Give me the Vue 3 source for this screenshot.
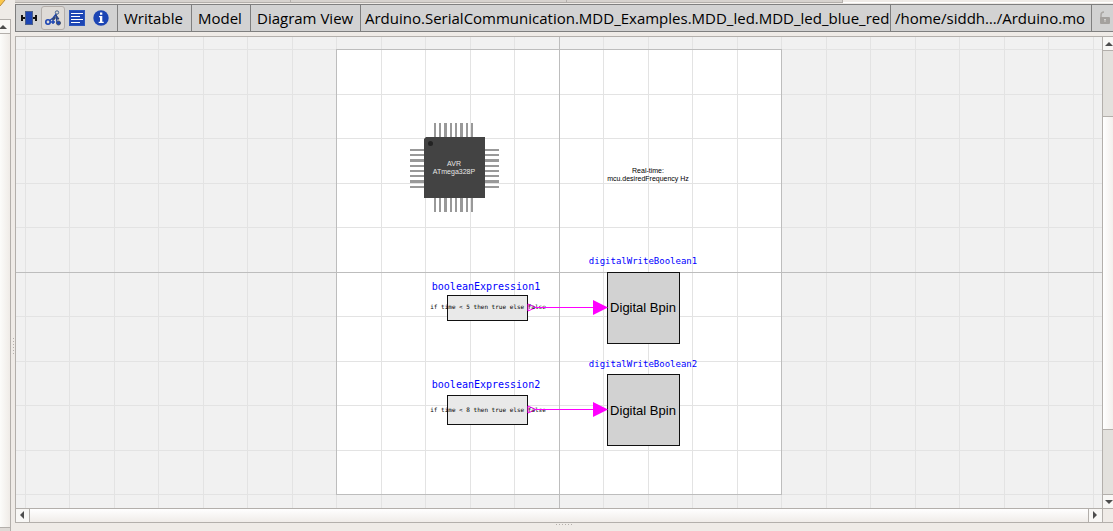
<script setup>
const STEP = 44.5
const CX = 559
const CY = 272
const offsets = Array.from({ length: 41 }, (_, i) => i - 20)
const columns = offsets.map((k) => Math.floor(CX + k * STEP))
const rows = offsets.map((k) => Math.floor(CY + k * STEP))

const pinsX = [[434, 2], [439, 2], [444, 3], [450, 2], [455, 2], [460, 3], [466, 2], [471, 2]]
const pinsY = [[149, 2], [154, 2], [159, 3], [165, 2], [170, 2], [175, 2], [180, 3], [186, 2]]

const expressions = [
  { name: 'booleanExpression1', text: 'if time < 5 then true else false', top: 295, height: 25, label: 290, mid: 307, base: 309 },
  { name: 'booleanExpression2', text: 'if time < 8 then true else false', top: 395, height: 29, label: 388, mid: 409, base: 412 },
]
const writers = [
  { name: 'digitalWriteBoolean1', top: 272, label: 264, base: 312 },
  { name: 'digitalWriteBoolean2', top: 374, label: 367, base: 415 },
]
</script>

<template>
  <div class="window">
    <aside class="side">
      <div class="side-head">
        <svg width="10" height="19" viewBox="0 0 10 19" aria-hidden="true">
          <path d="M0 0H5L0 6Z" fill="#fbc74c" />
          <path d="M5 0L0 6" stroke="#b98a3c" />
        </svg>
      </div>
      <button class="side-up" type="button" aria-label="Scroll list up">
        <svg width="10" height="13" viewBox="0 0 10 13"><path d="M-1 9L3 5L7 9Z" fill="#4d4d4d" /></svg>
      </button>
      <div class="side-thumb"></div>
      <div class="side-foot"></div>
    </aside>
    <div class="splitter"><i v-for="n in 6" :key="n"></i></div>

    <main class="main">
      <div class="tabs"><span></span><span></span><span></span></div>

      <div class="toolbar">
        <div class="views">
          <button type="button" aria-label="Icon view">
            <svg width="16" height="16" viewBox="0 0 16 16">
              <path d="M1 5V11M15 5V11" stroke="#111" stroke-width="2" />
              <path d="M1 8H15" stroke="#111" stroke-width="2" />
              <rect x="4.5" y="1.5" width="7" height="13" fill="#1c45b4" stroke="#4b5f88" stroke-width="1" />
            </svg>
          </button>
          <button class="active" type="button" aria-label="Diagram view">
            <svg width="16" height="16" viewBox="0 0 16 16">
              <path d="M4 11L8 8L12 3M11 4L12 13" fill="none" stroke="#1c45b4" stroke-width="1.3" />
              <circle cx="12" cy="2.5" r="1.7" fill="#dedbd7" stroke="#42618e" />
              <circle cx="3" cy="12" r="2.2" fill="#dedbd7" stroke="#1c45b4" stroke-width="1.6" />
              <path d="M7 9L10 7L9 10ZM11 5L14 9L11 9Z" fill="#1c45b4" stroke="#33466e" />
              <path d="M6 12H10M8 10V14" stroke="#1c45b4" stroke-width="1.5" />
              <circle cx="13.5" cy="13" r="2" fill="#1c45b4" stroke="#44536c" />
            </svg>
          </button>
          <button type="button" aria-label="Text view">
            <svg width="16" height="16" viewBox="0 0 16 16">
              <rect x=".5" y=".5" width="15" height="15" fill="#1c45b4" stroke="#2b56bd" />
              <path d="M2 3.5H14M2 6.5H11M2 9.5H14M2 12.5H11" stroke="#fff" />
            </svg>
          </button>
          <button type="button" aria-label="Documentation view">
            <svg width="16" height="16" viewBox="0 0 16 16">
              <circle cx="8" cy="8" r="7.7" fill="#1c45b4" />
              <path d="M7 2.5H9.3V4.7H7ZM6 6H9.3V11.7H10.7V13H5.7V11.7H7V7.2H6Z" fill="#fff" />
            </svg>
          </button>
        </div>
        <span class="cell mode">Writable</span>
        <span class="cell kind">Model</span>
        <span class="cell view">Diagram View</span>
        <span class="cell path">Arduino.SerialCommunication.MDD_Examples.MDD_led.MDD_led_blue_red</span>
        <span class="cell file">/home/siddh…/Arduino.mo</span>
        <button class="lock" type="button" aria-label="Lock file">
          <svg width="14" height="16" viewBox="0 0 14 16">
            <path d="M3 8V5Q3 2 6 2" fill="none" stroke="#aaa7a4" stroke-width="1.5" />
            <rect x="2" y="7" width="10" height="7" rx="1" fill="#a4a19e" />
            <path d="M7 9V12M6 9.5H8" stroke="#d4d2d0" />
          </svg>
        </button>
      </div>

      <div class="editor">
        <div class="canvas">
          <svg class="scene" viewBox="16 37 1086 471" role="img" aria-label="Model diagram">
            <rect x="336" y="49" width="446" height="446" fill="#fff" />
            <g fill="#e3e3e3">
              <rect v-for="x in columns" :key="'c' + x" :x="x" y="-500" width="1" height="1600" />
              <rect v-for="y in rows" :key="'r' + y" x="-400" :y="y" width="2000" height="1" />
            </g>
            <rect x="336.5" y="49.5" width="445" height="445" fill="none" stroke="#bdbdbd" />
            <rect :x="CX" y="-500" width="1" height="1600" fill="#bdbdbd" />
            <rect x="-400" :y="CY" width="2000" height="1" fill="#bdbdbd" />

            <g fill="#999">
              <template v-for="[x, w] in pinsX" :key="x">
                <rect :x="x" y="123" :width="w" height="14" />
                <rect :x="x" y="198" :width="w" height="14" />
              </template>
              <template v-for="[y, h] in pinsY" :key="y">
                <rect x="410" :y="y" width="14" :height="h" />
                <rect x="485" :y="y" width="14" :height="h" />
              </template>
            </g>
            <path d="M426 137H485V198H424V139Z" fill="#434343" />
            <circle cx="430.5" cy="143.5" r="2.5" fill="#222" />
            <text class="tiny light" x="454" y="166">AVR</text>
            <text class="tiny light" x="454" y="174">ATmega328P</text>
            <text class="tiny" x="648" y="173">Real-time:</text>
            <text class="tiny" x="648" y="181">mcu.desiredFrequency Hz</text>

            <g v-for="w in writers" :key="w.name">
              <rect x="607.5" :y="w.top + 0.5" width="72" height="71" fill="#d2d2d2" stroke="#111" />
              <text class="pin" x="643" :y="w.base">Digital Bpin</text>
              <text class="write-name" x="643" :y="w.label">{{ w.name }}</text>
            </g>

            <g v-for="e in expressions" :key="e.name">
              <rect x="447.5" :y="e.top + 0.5" width="80" :height="e.height" fill="#e9e9e9" stroke="#111" />
              <path :d="`M528 ${e.mid - 3}L536 ${e.mid + 0.5}L528 ${e.mid + 4}Z`" fill="#fff" stroke="#f0f" />
              <text class="expr" x="488" :y="e.base">{{ e.text }}</text>
              <text class="expr-name" x="486" :y="e.label">{{ e.name }}</text>
              <rect x="535" :y="e.mid" width="59" height="1" fill="#f0f" />
              <path :d="`M593 ${e.mid - 7}L608 ${e.mid + 0.5}L593 ${e.mid + 8}Z`" fill="#f0f" />
            </g>
          </svg>
        </div>
        <div class="vbar">
          <button type="button" aria-label="Scroll up">
            <svg width="10" height="13" viewBox="0 0 10 13"><path d="M2 9L6 5L10 9Z" fill="#4d4d4d" /></svg>
          </button>
          <div class="vtrack"><div class="vthumb"></div></div>
          <button type="button" aria-label="Scroll down">
            <svg width="10" height="13" viewBox="0 0 10 13"><path d="M2 5L6 9L10 5Z" fill="#4d4d4d" /></svg>
          </button>
        </div>
        <div class="hbar">
          <button type="button" aria-label="Scroll left">
            <svg width="13" height="13" viewBox="0 0 13 13"><path d="M8 2V10L4 6Z" fill="#4d4d4d" /></svg>
          </button>
          <div class="hthumb"></div>
          <button type="button" aria-label="Scroll right">
            <svg width="13" height="13" viewBox="0 0 13 13"><path d="M4 2V10L8 6Z" fill="#4d4d4d" /></svg>
          </button>
        </div>
        <div class="corner"></div>
      </div>
      <div class="bottom"><i v-for="n in 6" :key="n"></i></div>
    </main>
  </div>
</template>

<style>
body { margin: 0; background: #efebe7; }
</style>

<style scoped>
.window {
  display: flex;
  height: 100vh;
  overflow: hidden;
  background: #efebe7;
  font-family: "Open Sans", "Noto Sans", sans-serif;
  color: #000;
}
button {
  display: flex;
  align-items: center;
  justify-content: center;
  margin: 0;
  padding: 0;
  border: 0;
  background: none;
  box-sizing: border-box;
}
svg { display: block; }

.side {
  display: flex;
  flex-direction: column;
  flex: none;
  width: 11px;
}
.side-head { height: 19px; }
.side-up {
  height: 15px;
  border: solid #b3afab;
  border-width: 1px 1px 1px 0;
  background: #f8f7f5;
}
.side-thumb {
  flex: 1;
  border-right: 1px solid #b3afab;
  background: linear-gradient(90deg, #fcfcfa, #efebe7);
}
.side-foot {
  height: 3px;
  border: solid #b3afab;
  border-width: 1px 1px 0 0;
  background: #dedad6;
}
.splitter {
  display: flex;
  flex-direction: column;
  align-items: center;
  justify-content: center;
  gap: 2px;
  flex: none;
  width: 4px;
  padding-top: 160px;
}
.splitter i, .bottom i {
  width: 1px;
  height: 1px;
  background: #b3afab;
}

.main {
  display: flex;
  flex-direction: column;
  flex: 1;
  min-width: 0;
}
.tabs {
  display: flex;
  height: 2px;
  margin-bottom: 1px;
  border-bottom: 1px solid #fff;
}
.tabs span {
  box-sizing: border-box;
  width: 276px;
  height: 3px;
  border: solid #b3afab;
  border-width: 0 1px 1px 0;
  background: #d6d2ce;
}
.toolbar {
  display: flex;
  align-items: stretch;
  box-sizing: border-box;
  height: 28px;
  overflow: hidden;
  border: solid #7f7f7f;
  border-width: 1px 0 1px 1px;
  background: #d2d2d2;
  font-size: 15px;
  line-height: 26px;
}
.views {
  display: flex;
  align-items: center;
  flex: none;
  box-sizing: border-box;
  width: 101px;
  padding-left: 1px;
}
.views button {
  width: 24px;
  height: 24px;
}
.views .active {
  border: 1px solid #b3aeaa;
  border-radius: 3px;
  background: #dedbd7;
}
.cell {
  flex: none;
  box-sizing: border-box;
  padding-left: 6px;
  border-left: 1px solid #7f7f7f;
  white-space: nowrap;
}
.path, .file { padding-left: 4px; }
.mode { width: 74px; }
.kind { width: 59px; }
.view { width: 110px; }
.path { width: 530px; }
.file { width: 201px; }
.lock {
  flex: none;
  width: 29px;
  padding-left: 6px;
  justify-content: flex-start;
  border-left: 1px solid #7f7f7f;
}

.editor {
  display: grid;
  grid-template-columns: minmax(0, 1fr) 11px;
  grid-template-rows: minmax(0, 1fr) 15px;
  flex: 1;
  min-height: 0;
  margin-top: 4px;
  border-top: 1px solid #b3afab;
  border-left: 1px solid #b3afab;
}
.canvas {
  min-width: 0;
  overflow: hidden;
  background: #f1f1f1;
}
.scene {
  width: 100%;
  height: 100%;
  overflow: visible;
}
.scene text { text-anchor: middle; }
.tiny { font: 7px "Liberation Sans", Arial, sans-serif; }
.light { fill: #e6e6e6; }
.pin { font: 13px "Liberation Sans", Arial, sans-serif; }
.expr { font: 6px "DejaVu Sans Mono", monospace; }
.expr-name { font: 10px "DejaVu Sans Mono", monospace; fill: #00f; }
.write-name { font: 9px "DejaVu Sans Mono", monospace; fill: #00f; }

.vbar {
  display: flex;
  flex-direction: column;
  border-left: 1px solid #b3afab;
}
.vbar button {
  height: 14px;
  background: #f8f7f5;
}
.vbar button:first-child { border-bottom: 1px solid #b3afab; }
.vbar button:last-child { border-top: 1px solid #b3afab; }
.vtrack {
  display: grid;
  grid-template-rows: 65fr 314fr 64fr;
  flex: 1;
  background: #e3e1dd;
}
.vthumb {
  grid-row: 2;
  border: solid #b3afab;
  border-width: 1px 0;
  background: linear-gradient(90deg, #fff, #f3f0ed);
}
.hbar {
  display: flex;
  box-sizing: border-box;
  border: solid #b3afab;
  border-width: 1px 0;
}
.hbar button {
  width: 14px;
  background: #f8f7f5;
}
.hbar button:first-child { border-right: 1px solid #b3afab; }
.hbar button:last-child { border-left: 1px solid #b3afab; }
.hthumb {
  flex: 1;
  background: linear-gradient(#fff, #f0ece9);
}
.corner {
  border: solid #b3afab;
  border-width: 1px 0 1px 1px;
  box-sizing: border-box;
}
.bottom {
  display: flex;
  justify-content: center;
  gap: 2px;
  height: 7px;
  padding-top: 1px;
}
</style>
